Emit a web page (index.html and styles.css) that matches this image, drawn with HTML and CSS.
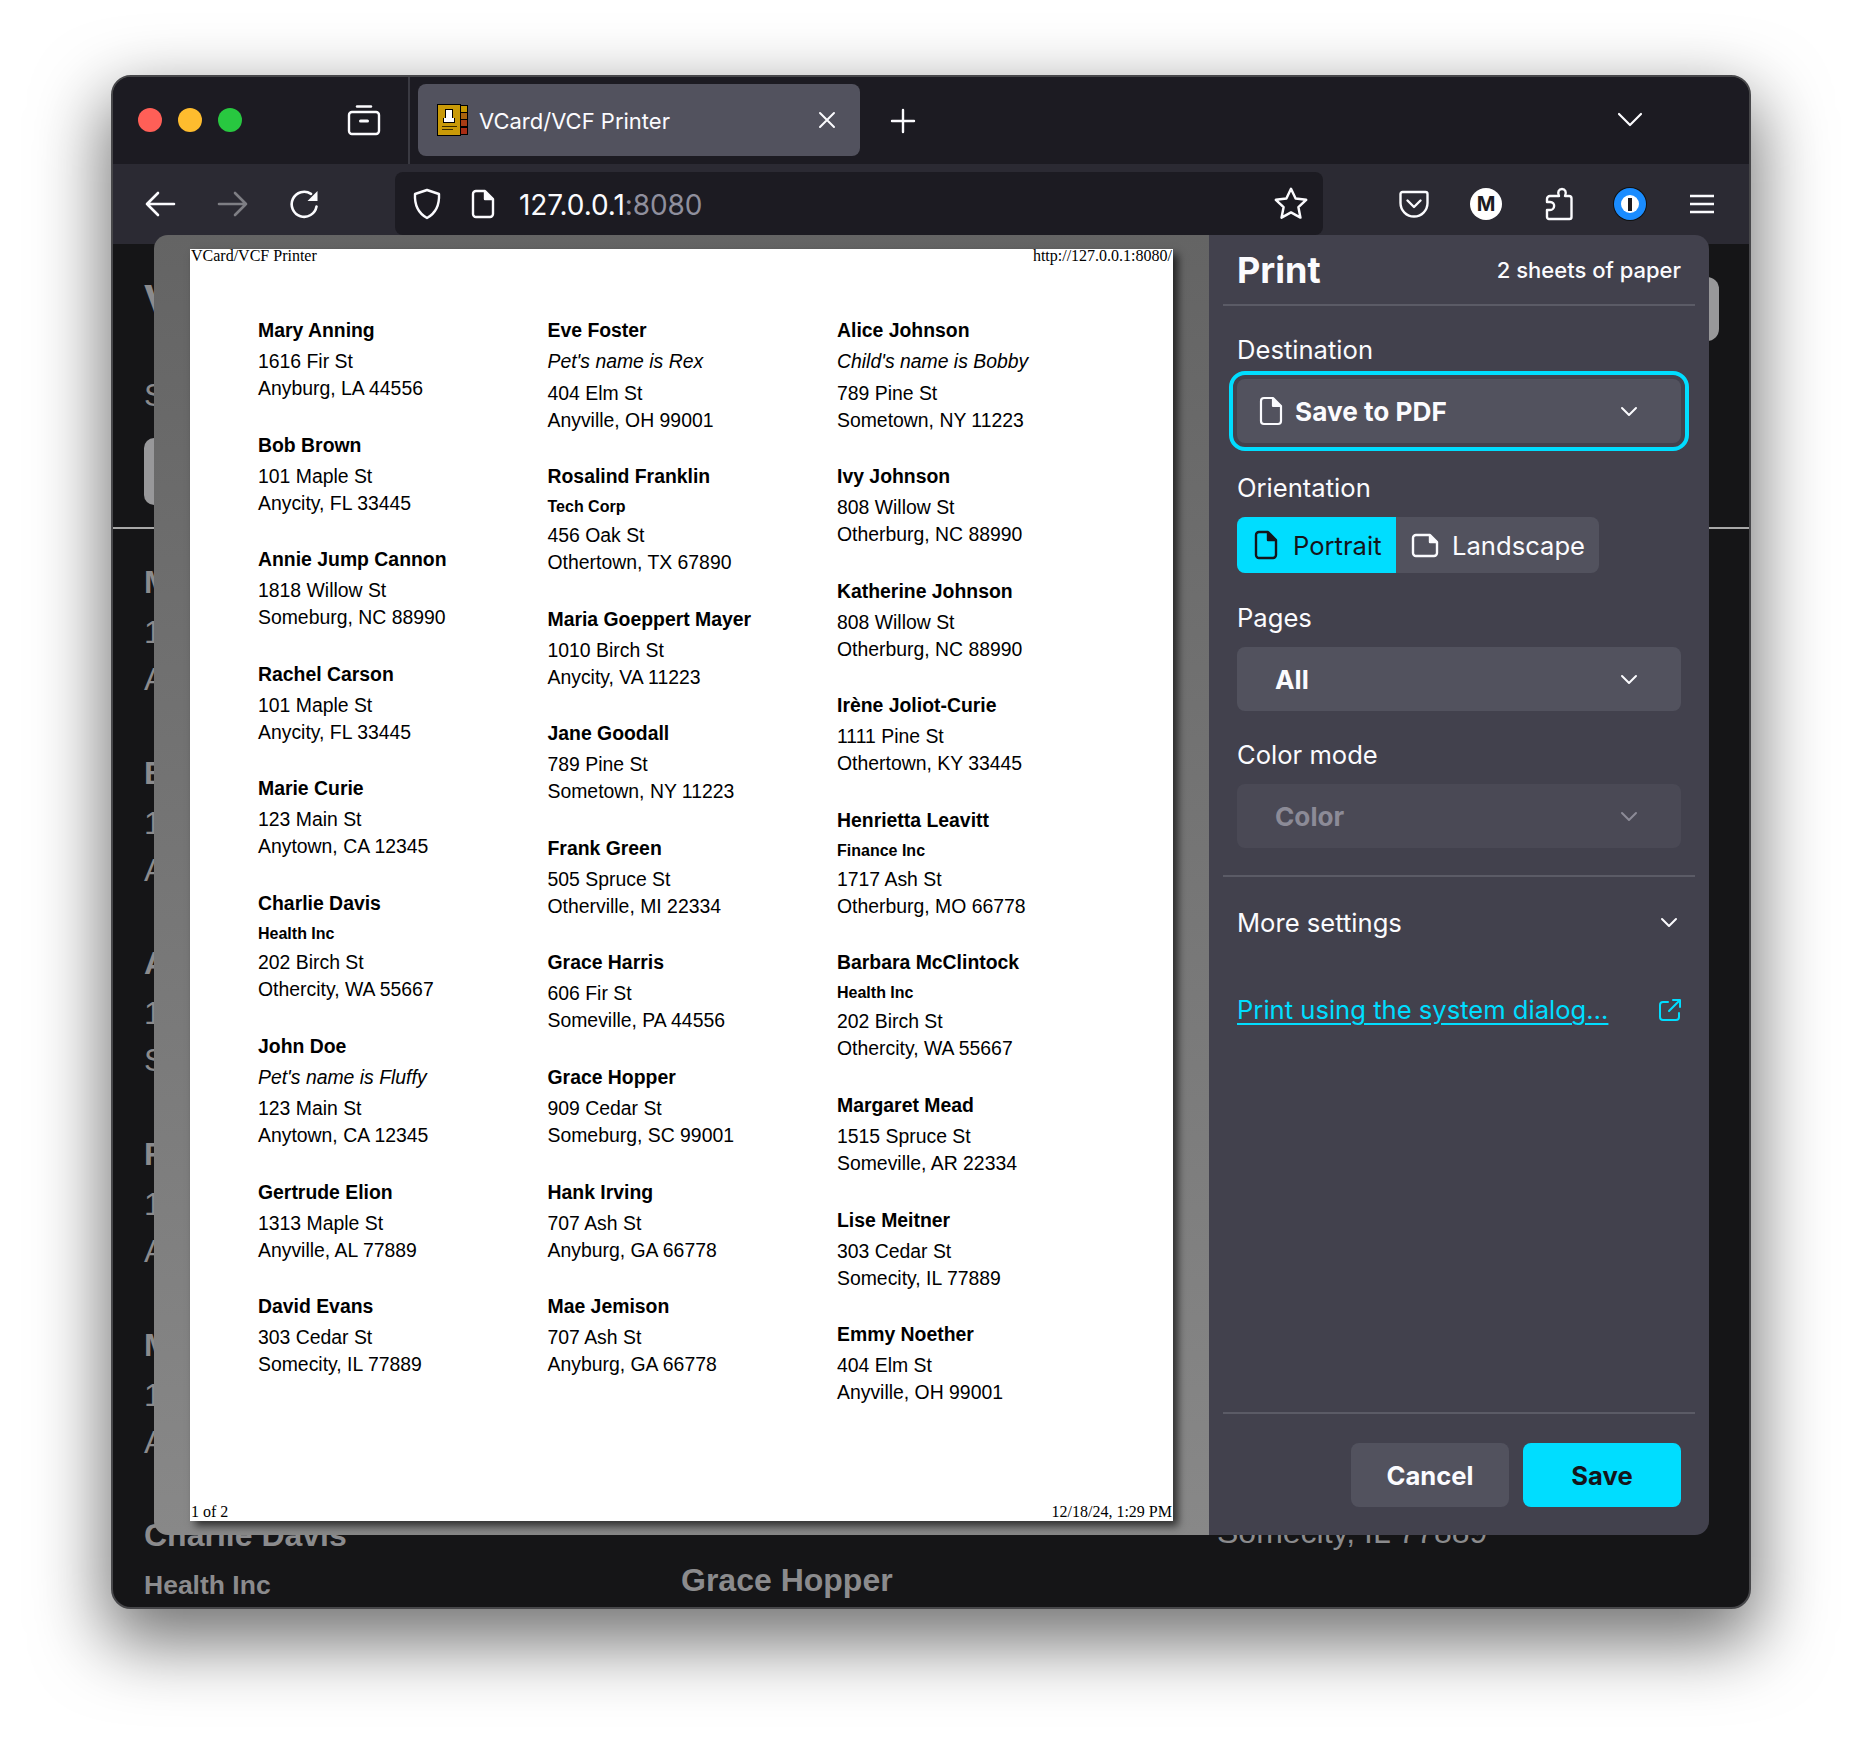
FILE: index.html
```html
<!DOCTYPE html>
<html lang="en">
<head>
    <meta charset="UTF-8">
    <title>VCard/VCF Printer</title>
    <link rel="stylesheet" href="styles.css">
</head>
<body>
<div class="window">
    <div class="tabbar">
        <div class="lights">
            <span class="light red"></span>
            <span class="light yellow"></span>
            <span class="light green"></span>
        </div>
        <div class="view-btn">
            <svg width="34" height="34" viewBox="0 0 34 34" fill="none" stroke="#fbfbfe" stroke-width="2.4" stroke-linejoin="round" stroke-linecap="round">
                <path d="M10 3.5h14"/>
                <rect x="2" y="9" width="30" height="22" rx="3"/>
                <path d="M13.5 18h7" stroke-width="3"/>
            </svg>
        </div>
        <div class="tab">
            <svg class="favicon" width="31" height="32" viewBox="0 0 31 32" shape-rendering="crispEdges">
                <rect x="22" y="1" width="9" height="30" fill="#000"/>
                <rect x="23" y="2" width="7" height="6" fill="#c89a00"/>
                <rect x="23" y="9" width="7" height="6" fill="#a8620c"/>
                <rect x="23" y="16" width="7" height="6" fill="#a83c14"/>
                <rect x="23" y="24" width="7" height="6" fill="#a82c14"/>
                <rect x="0" y="0" width="24" height="32" fill="#000"/>
                <rect x="1" y="1" width="22" height="30" fill="#c99a08"/>
                <rect x="8" y="5" width="8" height="9" fill="#000"/>
                <rect x="9" y="6" width="6" height="8" fill="#fff"/>
                <rect x="6" y="14" width="12" height="5" fill="#000"/>
                <rect x="7" y="14" width="10" height="4" fill="#fff"/>
                <rect x="5" y="22" width="15" height="1" fill="#3a2c00"/>
                <rect x="5" y="25" width="11" height="1" fill="#3a2c00"/>
            </svg>
            <span class="tab-title">VCard/VCF Printer</span>
            <svg class="tab-close" width="18" height="18" viewBox="0 0 18 18" stroke="#fbfbfe" stroke-width="2" stroke-linecap="round">
                <path d="M2 2l14 14M16 2L2 16"/>
            </svg>
        </div>
        <svg class="new-tab" width="26" height="26" viewBox="0 0 26 26" stroke="#fbfbfe" stroke-width="2.4" stroke-linecap="round">
            <path d="M13 2v22M2 13h22"/>
        </svg>
        <svg class="all-tabs" width="26" height="16" viewBox="0 0 26 16" fill="none" stroke="#fbfbfe" stroke-width="2.2" stroke-linecap="round" stroke-linejoin="round">
            <path d="M2 2l11 11L24 2"/>
        </svg>
    </div>

    <div class="toolbar">
        <div class="nav">
            <svg width="32" height="28" viewBox="0 0 32 28" fill="none" stroke="#fbfbfe" stroke-width="2.6" stroke-linecap="round" stroke-linejoin="round">
                <path d="M30 14H3M14 3L3 14l11 11"/>
            </svg>
            <svg class="dim" width="32" height="28" viewBox="0 0 32 28" fill="none" stroke="#fbfbfe" stroke-width="2.6" stroke-linecap="round" stroke-linejoin="round">
                <path d="M2 14h27M18 3l11 11-11 11"/>
            </svg>
            <svg width="30" height="30" viewBox="0 0 30 30" fill="none" stroke="#fbfbfe" stroke-width="2.6" stroke-linecap="round">
                <path d="M26.5 17.5A12.5 12.5 0 1 1 21 4.8"/>
                <path d="M27.5 2v10h-10z" fill="#fbfbfe" stroke="none"/>
            </svg>
        </div>
        <div class="urlbar">
            <svg class="shield" width="30" height="32" viewBox="0 0 30 32" fill="none" stroke="#fbfbfe" stroke-width="2.4" stroke-linejoin="round">
                <path d="M15 2l12 4c.6 11-3 19-12 24C6 25 2.400 17 3 6z"/>
            </svg>
            <svg class="page-ico" width="24" height="30" viewBox="0 0 24 30" fill="none" stroke="#fbfbfe" stroke-width="2.4" stroke-linejoin="round">
                <path d="M5 2h9l8 8v15a3 3 0 0 1-3 3H5a3 3 0 0 1-3-3V5a3 3 0 0 1 3-3z"/>
                <path d="M14 2v8h8" fill="#fbfbfe"/>
            </svg>
            <span class="url">127.0.0.1<span class="url-port">:8080</span></span>
            <svg class="star" width="36" height="36" viewBox="0 0 32 32" fill="none" stroke="#fbfbfe" stroke-width="2.2" stroke-linejoin="round">
                <path d="M16 2.500l4.100 8.600 9.400 1.200-6.900 6.500 1.800 9.300L16 23.500l-8.400 4.600 1.800-9.300-6.900-6.500 9.400-1.200z"/>
            </svg>
        </div>
        <div class="tools">
            <svg class="pocket" width="30" height="28" viewBox="0 0 30 28" fill="none" stroke="#fbfbfe" stroke-width="2.4" stroke-linecap="round" stroke-linejoin="round">
                <path d="M3.500 2h23A2 2 0 0 1 28.500 4v9a13.500 13.500 0 0 1-27 0V4a2 2 0 0 1 2-2z"/>
                <path d="M8.500 10.500L15 17l6.500-6.500"/>
            </svg>
            <span class="avatar">M</span>
            <svg class="puzzle" width="28" height="34" viewBox="0 0 28 34" fill="none" stroke="#fbfbfe" stroke-width="2.4" stroke-linejoin="round">
                <path d="M10 9h4c-2-4 0-7 3-7s5 3 3 7h4a2.500 2.500 0 0 1 2.500 2.500V30a2 2 0 0 1-2 2H4a2 2 0 0 1-2-2v-7h3c5 0 6-8 0-8H2v-3a3 3 0 0 1 3-3z"/>
            </svg>
            <span class="onepass"><span class="onepass-in"><span class="onepass-bar"></span></span></span>
            <svg class="burger" width="24" height="20" viewBox="0 0 24 20" stroke="#fbfbfe" stroke-width="2.4">
                <path d="M0 2h24M0 10h24M0 18h24"/>
            </svg>
        </div>
    </div>

    <div class="content">
        <div class="bg-head">
            <div class="bg-intro">
                <h1>VCard/VCF Printer</h1>
                <p class="bg-sub">Select a file to print</p>
                <div class="bg-btn"></div>
            </div>
            <div class="bg-btn-right"></div>
        </div>
        <hr class="bg-rule">
        <div class="bg-cols">
            <div class="bg-col bg-col-first">
                <div class="bg-card"><b>Mary Anning</b><p>1616 Fir St</p><p>Anyburg, LA 44556</p></div>
                <div class="bg-card"><b>Bob Brown</b><p>101 Maple St</p><p>Anycity, FL 33445</p></div>
                <div class="bg-card"><b>Annie Jump Cannon</b><p>1818 Willow St</p><p>Someburg, NC 88990</p></div>
                <div class="bg-card"><b>Rachel Carson</b><p>101 Maple St</p><p>Anycity, FL 33445</p></div>
                <div class="bg-card"><b>Marie Curie</b><p>123 Main St</p><p>Anytown, CA 12345</p></div>
                <div class="bg-card"><b>Charlie Davis</b><b class="bg-org">Health Inc</b></div>
            </div>
            <div class="bg-col bg-col-mid">
                <div class="bg-card"><b>Grace Hopper</b></div>
            </div>
            <div class="bg-col bg-col-last">
                <div class="bg-card"><b>David Evans</b><p>303 Cedar St</p><p>Somecity, IL 77889</p></div>
            </div>
        </div>
    </div>

    <div class="dialog">
        <div class="preview">
            <div class="paper">
                <div class="paper-line"><span>VCard/VCF Printer</span><span>http://127.0.0.1:8080/</span></div>
                <div class="sheet">
                    <div class="sheet-col">
                        <div class="card"><h3>Mary Anning</h3><p>1616 Fir St</p><p>Anyburg, LA 44556</p></div>
                        <div class="card"><h3>Bob Brown</h3><p>101 Maple St</p><p>Anycity, FL 33445</p></div>
                        <div class="card"><h3>Annie Jump Cannon</h3><p>1818 Willow St</p><p>Someburg, NC 88990</p></div>
                        <div class="card"><h3>Rachel Carson</h3><p>101 Maple St</p><p>Anycity, FL 33445</p></div>
                        <div class="card"><h3>Marie Curie</h3><p>123 Main St</p><p>Anytown, CA 12345</p></div>
                        <div class="card"><h3>Charlie Davis</h3><h4>Health Inc</h4><p>202 Birch St</p><p>Othercity, WA 55667</p></div>
                        <div class="card"><h3>John Doe</h3><p class="note">Pet's name is Fluffy</p><p>123 Main St</p><p>Anytown, CA 12345</p></div>
                        <div class="card"><h3>Gertrude Elion</h3><p>1313 Maple St</p><p>Anyville, AL 77889</p></div>
                        <div class="card"><h3>David Evans</h3><p>303 Cedar St</p><p>Somecity, IL 77889</p></div>
                    </div>
                    <div class="sheet-col">
                        <div class="card"><h3>Eve Foster</h3><p class="note">Pet's name is Rex</p><p>404 Elm St</p><p>Anyville, OH 99001</p></div>
                        <div class="card"><h3>Rosalind Franklin</h3><h4>Tech Corp</h4><p>456 Oak St</p><p>Othertown, TX 67890</p></div>
                        <div class="card"><h3>Maria Goeppert Mayer</h3><p>1010 Birch St</p><p>Anycity, VA 11223</p></div>
                        <div class="card"><h3>Jane Goodall</h3><p>789 Pine St</p><p>Sometown, NY 11223</p></div>
                        <div class="card"><h3>Frank Green</h3><p>505 Spruce St</p><p>Otherville, MI 22334</p></div>
                        <div class="card"><h3>Grace Harris</h3><p>606 Fir St</p><p>Someville, PA 44556</p></div>
                        <div class="card"><h3>Grace Hopper</h3><p>909 Cedar St</p><p>Someburg, SC 99001</p></div>
                        <div class="card"><h3>Hank Irving</h3><p>707 Ash St</p><p>Anyburg, GA 66778</p></div>
                        <div class="card"><h3>Mae Jemison</h3><p>707 Ash St</p><p>Anyburg, GA 66778</p></div>
                    </div>
                    <div class="sheet-col">
                        <div class="card"><h3>Alice Johnson</h3><p class="note">Child's name is Bobby</p><p>789 Pine St</p><p>Sometown, NY 11223</p></div>
                        <div class="card"><h3>Ivy Johnson</h3><p>808 Willow St</p><p>Otherburg, NC 88990</p></div>
                        <div class="card"><h3>Katherine Johnson</h3><p>808 Willow St</p><p>Otherburg, NC 88990</p></div>
                        <div class="card"><h3>Irène Joliot-Curie</h3><p>1111 Pine St</p><p>Othertown, KY 33445</p></div>
                        <div class="card"><h3>Henrietta Leavitt</h3><h4>Finance Inc</h4><p>1717 Ash St</p><p>Otherburg, MO 66778</p></div>
                        <div class="card"><h3>Barbara McClintock</h3><h4>Health Inc</h4><p>202 Birch St</p><p>Othercity, WA 55667</p></div>
                        <div class="card"><h3>Margaret Mead</h3><p>1515 Spruce St</p><p>Someville, AR 22334</p></div>
                        <div class="card"><h3>Lise Meitner</h3><p>303 Cedar St</p><p>Somecity, IL 77889</p></div>
                        <div class="card"><h3>Emmy Noether</h3><p>404 Elm St</p><p>Anyville, OH 99001</p></div>
                    </div>
                </div>
                <div class="paper-line"><span>1 of 2</span><span>12/18/24, 1:29 PM</span></div>
            </div>
        </div>

        <div class="panel">
            <div class="panel-head">
                <span class="panel-title">Print</span>
                <span class="sheets">2 sheets of paper</span>
            </div>

            <div class="field">
                <div class="label">Destination</div>
                <div class="select select-focus">
                    <svg class="select-ico" width="24" height="30" viewBox="0 0 24 30" fill="none" stroke="#fbfbfe" stroke-width="2.2" stroke-linejoin="round">
                        <path d="M5 2h9l8 8v15a3 3 0 0 1-3 3H5a3 3 0 0 1-3-3V5a3 3 0 0 1 3-3z"/>
                        <path d="M14 2v8h8" fill="#fbfbfe"/>
                    </svg>
                    <span>Save to PDF</span>
                    <svg class="chev" width="18" height="11" viewBox="0 0 18 11" fill="none" stroke="currentColor" stroke-width="2" stroke-linecap="round" stroke-linejoin="round"><path d="M2 2l7 7 7-7"/></svg>
                </div>
            </div>

            <div class="field field-wide">
                <div class="label">Orientation</div>
                <div class="orient">
                    <div class="orient-btn orient-on">
                        <svg width="24" height="30" viewBox="0 0 24 30" fill="none" stroke="#15141a" stroke-width="2.4" stroke-linejoin="round">
                            <path d="M5 2h9l8 8v15a3 3 0 0 1-3 3H5a3 3 0 0 1-3-3V5a3 3 0 0 1 3-3z"/>
                            <path d="M14 2v8h8" fill="#15141a"/>
                        </svg>
                        <span>Portrait</span>
                    </div>
                    <div class="orient-btn">
                        <svg width="28" height="25" viewBox="0 0 28 25" fill="none" stroke="#fbfbfe" stroke-width="2.400" stroke-linejoin="round">
                            <path d="M5 2h14l7 7v11a3 3 0 0 1-3 3H5a3 3 0 0 1-3-3V5a3 3 0 0 1 3-3z"/>
                            <path d="M19 2v7h7" fill="#fbfbfe"/>
                        </svg>
                        <span>Landscape</span>
                    </div>
                </div>
            </div>

            <div class="field field-wide">
                <div class="label">Pages</div>
                <div class="select select-plain">
                    <span>All</span>
                    <svg class="chev" width="18" height="11" viewBox="0 0 18 11" fill="none" stroke="currentColor" stroke-width="2" stroke-linecap="round" stroke-linejoin="round"><path d="M2 2l7 7 7-7"/></svg>
                </div>
            </div>

            <div class="field">
                <div class="label">Color mode</div>
                <div class="select select-plain select-off">
                    <span>Color</span>
                    <svg class="chev" width="18" height="11" viewBox="0 0 18 11" fill="none" stroke="currentColor" stroke-width="2" stroke-linecap="round" stroke-linejoin="round"><path d="M2 2l7 7 7-7"/></svg>
                </div>
            </div>

            <div class="more">
                <span>More settings</span>
                <svg width="18" height="11" viewBox="0 0 18 11" fill="none" stroke="#fbfbfe" stroke-width="2" stroke-linecap="round" stroke-linejoin="round"><path d="M2 2l7 7 7-7"/></svg>
            </div>

            <div class="system">
                <a class="system-link">Print using the system dialog…</a>
                <svg width="22" height="22" viewBox="0 0 22 22" fill="none" stroke="#00ddff" stroke-width="2" stroke-linecap="round" stroke-linejoin="round">
                    <path d="M9 3H4a3 3 0 0 0-3 3v12a3 3 0 0 0 3 3h13a3 3 0 0 0 3-3v-4"/>
                    <path d="M10 12L20.500 1.500M14 1h7v7"/>
                </svg>
            </div>

            <div class="panel-foot">
                <button class="btn" type="button">Cancel</button>
                <button class="btn btn-save" type="button">Save</button>
            </div>
        </div>
    </div>
</div>
</body>
</html>
```

FILE: styles.css
```css
*{
    box-sizing: border-box;
}

body{
    margin: 0;
    height: 1756px;
    padding: 75px 111px 0;
    background-color: white;
    font-family: Inter, "Liberation Sans", sans-serif;
    overflow: hidden;
}

p, h1, h3, h4{
    margin: 0;
}

.window{
    position: relative;
    width: 1640px;
    height: 1534px;
    display: flex;
    flex-direction: column;
    border: 2px solid #47474a;
    border-radius: 20px;
    background-color: #151517;
    box-shadow: 0 28px 70px 6px rgba(0,0,0,.55);
    overflow: hidden;
}

/* tab strip */
.tabbar{
    height: 87px;
    flex: none;
    display: flex;
    align-items: center;
    background-color: #1c1b22;
}

.lights{
    display: flex;
    gap: 16px;
    margin-left: 25px;
    margin-top: -1px;
}

.light{
    width: 24px;
    height: 24px;
    border-radius: 50%;
}

.red{ background-color: #ff5f57; }
.yellow{ background-color: #febc2e; }
.green{ background-color: #28c840; }

.view-btn{
    margin-left: 105px;
    width: 63px;
    height: 87px;
    display: flex;
    align-items: center;
    border-right: 2px solid #3a3a42;
}

.view-btn svg{
    margin-top: -1px;
}

.tab{
    width: 442px;
    height: 72px;
    margin-left: 8px;
    margin-top: -2px;
    display: flex;
    align-items: center;
    padding-left: 19px;
    border-radius: 8px;
    background-color: #52525e;
    color: #fbfbfe;
}

.tab-title{
    margin-left: 11px;
    padding-top: 3px;
    font-size: 22px;
    white-space: nowrap;
}

.tab-close{
    margin-left: auto;
    margin-right: 24px;
}

.new-tab{
    margin-left: 30px;
}

.all-tabs{
    margin-left: auto;
    margin-right: 106px;
    margin-top: -2px;
}

/* nav bar */
.toolbar{
    height: 80px;
    flex: none;
    display: flex;
    background-color: #2b2a33;
}

.nav{
    width: 282px;
    padding: 0 0 0 31px;
    display: flex;
    align-items: center;
    gap: 41px;
}

.nav svg{
    margin-top: -1px;
}

.dim{
    opacity: .4;
}

.urlbar{
    width: 928px;
    height: 63px;
    margin-top: 8px;
    display: flex;
    align-items: center;
    padding: 0 14px 0 17px;
    border-radius: 8px;
    background-color: #1c1b22;
    color: #fbfbfe;
}

.page-ico{
    margin-left: 29px;
}

.url{
    margin-left: 24px;
    padding-top: 2px;
    font-size: 28px;
    letter-spacing: -0.08px;
}

.url-port{
    color: #8f8f9d;
}

.star{
    margin-left: auto;
}

.tools{
    flex: 1;
    display: flex;
    align-items: center;
    padding-left: 76px;
}

.avatar{
    width: 32px;
    height: 32px;
    margin-left: 41px;
    border-radius: 50%;
    background-color: white;
    color: #1c1b22;
    font-size: 20px;
    font-weight: 700;
    line-height: 32px;
    text-align: center;
}

.puzzle{
    margin-left: 43px;
}

.onepass{
    width: 32px;
    height: 32px;
    margin-left: 41px;
    display: flex;
    align-items: center;
    justify-content: center;
    border-radius: 50%;
    background-color: #1a8cff;
    box-shadow: 0 0 0 1px #111;
}

.onepass-in{
    width: 18px;
    height: 18px;
    display: flex;
    align-items: center;
    justify-content: center;
    border-radius: 50%;
    background-color: white;
}

.onepass-bar{
    width: 4px;
    height: 13px;
    background-color: #1c1b22;
}

.burger{
    margin-left: 44px;
}

/* the page behind the dialog, dimmed */
.content{
    flex: 1;
    padding: 0 30px 0 31px;
    color: #8b8b8d;
    font-family: "Liberation Sans", Arial, sans-serif;
    overflow: hidden;
}

.bg-head{
    display: flex;
    justify-content: space-between;
}

h1{
    margin-top: 31px;
    font-size: 46px;
    line-height: 52px;
    white-space: nowrap;
}

.bg-sub{
    margin-top: 48px;
    font-size: 32px;
    line-height: 40px;
}

.bg-btn{
    width: 220px;
    height: 67px;
    margin-top: 23px;
    border-radius: 10px;
    background-color: #98989a;
}

.bg-btn-right{
    width: 100px;
    height: 64px;
    margin-top: 33px;
    border-radius: 12px;
    background-color: #98989a;
}

.bg-rule{
    height: 2px;
    margin: 22px -30px 0 -31px;
    border: none;
    background-color: #a8a8a8;
}

.bg-cols{
    display: flex;
    margin-top: 29px;
}

.bg-col{
    width: 536px;
    flex: none;
}

.bg-col-first{
    width: 537px;
}

.bg-col-mid{
    margin-top: 998px;
}

.bg-col-last{
    margin-top: 853px;
}

.bg-card{
    margin-bottom: 45.700px;
    font-size: 32px;
    line-height: 47px;
}

.bg-card b{
    display: block;
    line-height: 48px;
    margin-bottom: 3px;
}

.bg-card .bg-org{
    font-size: 26.500px;
    line-height: 46px;
}

/* print dialog */
.dialog{
    position: absolute;
    left: 41px;
    top: 158px;
    width: 1555px;
    height: 1300px;
    display: flex;
    border-radius: 14px;
    overflow: hidden;
}

.preview{
    width: 1055px;
    flex: none;
    padding: 14px 0 0 36px;
    background: linear-gradient(#646464, #888888);
}

.paper{
    width: 983px;
    height: 1272px;
    display: flex;
    flex-direction: column;
    background-color: white;
    box-shadow: 5px 5px 8px rgba(0,0,0,.65);
    color: black;
    font-family: "Liberation Sans", Arial, sans-serif;
}

.paper-line{
    display: flex;
    justify-content: space-between;
    padding: 0 1px 0 1px;
    font-family: "Liberation Serif", "Times New Roman", serif;
    font-size: 16px;
    line-height: 18px;
    color: black;
}

.paper-line:first-child{
    line-height: 14px;
}

.paper-line:last-child{
    margin-top: auto;
}

.sheet{
    display: grid;
    grid-template-columns: repeat(3, 289.500px);
    margin-top: 51px;
    padding-left: 68px;
}

.card{
    margin-bottom: 26.600px;
    font-size: 19.400px;
    line-height: 27px;
}

h3{
    padding-top: 1px;
    margin-bottom: 2px;
    font-size: 19.400px;
    line-height: 31px;
}

h4{
    margin: -1px 0 1px;
    font-size: 16px;
    line-height: 28px;
}

.note{
    margin-bottom: 4.500px;
    font-style: italic;
}

.panel{
    flex: 1;
    display: flex;
    flex-direction: column;
    padding: 0 14px;
    background-color: #42414d;
    color: #fbfbfe;
    font-size: 25.600px;
}

.panel-head{
    height: 71px;
    flex: none;
    display: flex;
    align-items: center;
    justify-content: space-between;
    padding: 0 14px;
    border-bottom: 2px solid #5b5b66;
}

.panel-title{
    font-size: 36px;
    font-weight: 700;
}

.sheets{
    font-size: 22px;
    font-weight: 500;
}

.field{
    margin-top: 28px;
    padding: 0 14px;
}

.field-wide{
    margin-top: 29px;
}

.label{
    margin-bottom: 13px;
    line-height: 32px;
}

.select{
    height: 64px;
    display: flex;
    align-items: center;
    padding-right: 43px;
    border-radius: 8px;
    background-color: #52525e;
    font-size: 26.200px;
    font-weight: 700;
}

.select-focus{
    padding-left: 22px;
    outline: 4px solid #00ddff;
    outline-offset: 4px;
}

.select-plain{
    padding-left: 38px;
}

.select-ico{
    margin-right: 12px;
}

.chev{
    margin-left: auto;
}

.select-off{
    background-color: #4a4955;
    color: #8c8b97;
}

.orient{
    display: flex;
    height: 56px;
    width: 362px;
    border-radius: 8px;
    background-color: #52525e;
    overflow: hidden;
}

.orient-btn{
    display: flex;
    align-items: center;
    gap: 13px;
    padding-left: 15px;
    width: 203px;
}

.orient-on{
    width: 159px;
    gap: 15px;
    padding-left: 17px;
    background-color: #00ddff;
    color: #15141a;
}

.more{
    height: 92px;
    margin-top: 27px;
    display: flex;
    align-items: center;
    justify-content: space-between;
    padding: 0 17px 0 14px;
    border-top: 2px solid #5b5b66;
}

.system{
    margin-top: 27px;
    display: flex;
    align-items: center;
    justify-content: space-between;
    padding: 0 14px;
    color: #00ddff;
}

.system-link{
    text-decoration: underline;
    text-underline-offset: 4px;
}

.panel-foot{
    margin-top: auto;
    display: flex;
    justify-content: flex-end;
    gap: 14px;
    padding: 29px 14px 28px;
    border-top: 2px solid #5b5b66;
}

.btn{
    width: 158px;
    height: 64px;
    border: none;
    border-radius: 8px;
    background-color: #52525e;
    color: #fbfbfe;
    font-family: inherit;
    font-size: 25.600px;
    font-weight: 700;
}

.btn-save{
    background-color: #00ddff;
    color: #15141a;
}
```
